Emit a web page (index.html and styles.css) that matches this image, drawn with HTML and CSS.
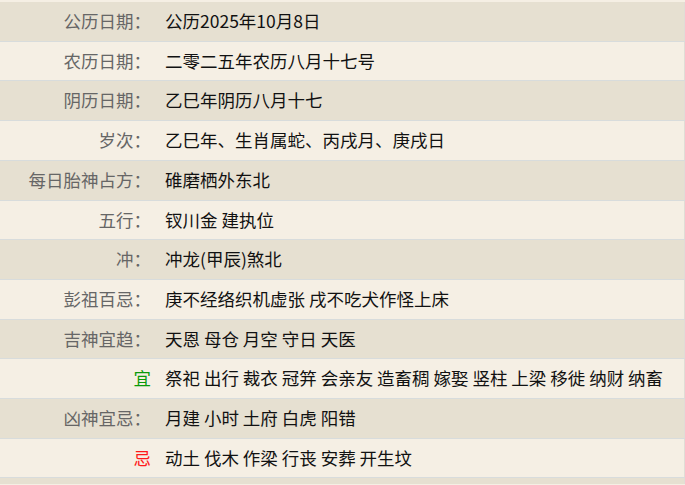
FILE: index.html
```html
<!DOCTYPE html>
<html lang="zh">
<head>
<meta charset="utf-8">
<link rel="stylesheet" href="styles.css">
</head>
<body>
<table class="almanac">
  <tr class="dark"><td class="label">公历日期：</td><td class="value">公历2025年10月8日</td></tr>
  <tr class="light"><td class="label">农历日期：</td><td class="value">二零二五年农历八月十七号</td></tr>
  <tr class="dark"><td class="label">阴历日期：</td><td class="value">乙巳年阴历八月十七</td></tr>
  <tr class="light"><td class="label">岁次：</td><td class="value">乙巳年、生肖属蛇、丙戌月、庚戌日</td></tr>
  <tr class="dark"><td class="label">每日胎神占方：</td><td class="value">碓磨栖外东北</td></tr>
  <tr class="light"><td class="label">五行：</td><td class="value">钗川金 建执位</td></tr>
  <tr class="dark"><td class="label">冲：</td><td class="value">冲龙(甲辰)煞北</td></tr>
  <tr class="light"><td class="label">彭祖百忌：</td><td class="value">庚不经络织机虚张 戌不吃犬作怪上床</td></tr>
  <tr class="dark"><td class="label">吉神宜趋：</td><td class="value">天恩 母仓 月空 守日 天医</td></tr>
  <tr class="light"><td class="label"><span class="yi">宜</span></td><td class="value">祭祀 出行 裁衣 冠笄 会亲友 造畜稠 嫁娶 竖柱 上梁 移徙 纳财 纳畜</td></tr>
  <tr class="dark"><td class="label">凶神宜忌：</td><td class="value">月建 小时 土府 白虎 阳错</td></tr>
  <tr class="light"><td class="label"><span class="ji">忌</span></td><td class="value">动土 伐木 作梁 行丧 安葬 开生坟</td></tr>
  <tr class="dark tail"><td class="label"></td><td class="value"></td></tr>
</table>
</body>
</html>
```

FILE: styles.css
```css
html, body {
  margin: 0;
  padding: 0;
  background: #f5efe4;
  overflow: hidden;
}
body {
  font-family: "Noto Sans CJK SC", "Noto Sans", sans-serif;
  font-size: 17.5px;
  padding-top: 2px;
}
.almanac {
  width: 100%;
  border-collapse: collapse;
  border-right: 1px solid #e0ddd6;
}
.almanac td {
  padding: 8px 0;
  line-height: 22.7px;
  height: 22.7px;
  border-bottom: 1px solid #d8dcdc;
  white-space: nowrap;
}
.almanac .tail td {
  padding: 0;
  height: 6px;
  line-height: 6px;
  border-bottom: 0;
}
.dark { background: #e6e0d1; }
.light { background: #f5efe4; }
.label {
  width: 151px;
  text-align: right;
  color: #666;
  padding-right: 14px !important;
}
.value {
  color: #111;
}
.yi { color: #0a9a0a; }
.ji { color: #ff1a1a; }
```
